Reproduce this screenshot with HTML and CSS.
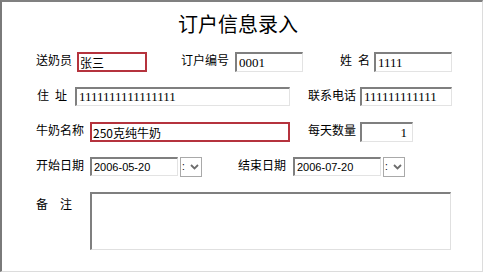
FILE: index.html
```html
<!DOCTYPE html>
<html>

<head>
    <title>订户信息录入</title>
    <link rel="stylesheet" href="styles.css">
</head>

<body>
    <div class="panel">
        <div class="panel-title">订户信息录入</div>

        <div class="form-row">
            <span class="lbl lbl-sender">送奶员</span>
            <input class="box box-red w-sender" type="text" value="张三">
            <span class="lbl lbl-no">订户编号</span>
            <input class="box box-num w-no" type="text" value="0001">
            <span class="lbl lbl-spread lbl-name"><span>姓</span><span>名</span></span>
            <input class="box box-num w-name" type="text" value="1111">
        </div>

        <div class="form-row">
            <span class="lbl lbl-spread lbl-addr"><span>住</span><span>址</span></span>
            <input class="box box-num w-addr" type="text" value="1111111111111111">
            <span class="lbl lbl-tel">联系电话</span>
            <input class="box box-num w-tel" type="text" value="111111111111">
        </div>

        <div class="form-row">
            <span class="lbl lbl-milk">牛奶名称</span>
            <input class="box box-red w-milk" type="text" value="250克纯牛奶">
            <span class="lbl lbl-tel">每天数量</span>
            <input class="box box-num box-right w-qty" type="text" value="1">
        </div>

        <div class="form-row">
            <span class="lbl lbl-milk">开始日期</span>
            <input class="box box-date w-date" type="text" value="2006-05-20">
            <div class="drop">
                <span class="drop-txt">:</span>
                <svg class="drop-arrow" width="9" height="6" viewBox="0 0 9 6"><path d="M1 1 L4.5 4.5 L8 1" fill="none" stroke="#6d6d6d" stroke-width="1.8"/></svg>
            </div>
            <span class="lbl lbl-end">结束日期</span>
            <input class="box box-date w-date" type="text" value="2006-07-20">
            <div class="drop">
                <span class="drop-txt">:</span>
                <svg class="drop-arrow" width="9" height="6" viewBox="0 0 9 6"><path d="M1 1 L4.5 4.5 L8 1" fill="none" stroke="#6d6d6d" stroke-width="1.8"/></svg>
            </div>
        </div>

        <div class="form-row form-row-memo">
            <span class="lbl lbl-spread lbl-memo"><span>备</span><span>注</span></span>
            <textarea class="box memo"></textarea>
        </div>
    </div>
</body>

</html>
```

FILE: styles.css
```css
body{
    margin: 0;
    background-color: #ffffff;
    font-family: "Noto Sans CJK SC", sans-serif;
    font-size: 12px;
    color: #000000;
}
.panel{
    width: 483px;
    height: 272px;
    box-sizing: border-box;
    border-top: 2px solid #808080;
    border-left: 2px solid #7a7a7a;
    border-right: 1px solid #dcdcdc;
    border-bottom: 1px solid #dcdcdc;
    padding: 10px 0 0 34px;
}
.panel-title{
    font-size: 20px;
    line-height: 24px;
    height: 24px;
    margin: 0 0 16px 142px;
}
.form-row{
    display: flex;
    align-items: flex-start;
    height: 20px;
    margin-bottom: 15px;
}
.form-row-memo{
    height: 58px;
}
.lbl{
    line-height: 14px;
    padding-top: 1px;
    white-space: nowrap;
    flex: none;
    box-sizing: border-box;
}
.lbl-spread{
    display: flex;
    justify-content: space-between;
}
.lbl-sender{ width: 41px; }
.lbl-no{ width: 54px; margin-left: 34px; }
.lbl-name{ width: 34px; margin-left: 37px; padding-right: 4px; }
.lbl-addr{ width: 39px; padding-left: 1px; padding-right: 8px; }
.lbl-tel{ width: 52px; margin-left: 18px; }
.lbl-milk{ width: 54px; }
.lbl-end{ width: 55px; margin-left: 36px; }
.lbl-memo{ width: 54px; padding-right: 18px; padding-top: 5px; }

.box{
    flex: none;
    box-sizing: border-box;
    height: 20px;
    margin: 0;
    padding: 0 2px;
    border-top: 2px solid #7f7f7f;
    border-left: 2px solid #7f7f7f;
    border-right: 1px solid #e3e3e3;
    border-bottom: 1px solid #e3e3e3;
    background-color: #ffffff;
    outline: none;
    color: #000000;
    font-family: "Noto Sans CJK SC", sans-serif;
    font-size: 12px;
}
.box-red{
    border: 2px solid #b5333d;
    font-size: 12px;
    padding-left: 1px;
}
.box-num{
    font-family: "Liberation Serif", serif;
    font-size: 13px;
}
.box-right{
    text-align: right;
    padding-right: 5px;
}
.box-date{
    font-family: "Liberation Sans", sans-serif;
    font-size: 11px;
    height: 19px;
}
.w-sender{ width: 70px; }
.w-no{ width: 68px; }
.w-name{ width: 78px; }
.w-addr{ width: 215px; height: 19px; }
.w-tel{ width: 92px; height: 19px; }
.w-milk{ width: 200px; }
.w-qty{ width: 53px; }
.w-date{ width: 88px; }

.drop{
    flex: none;
    box-sizing: border-box;
    width: 22px;
    height: 20px;
    margin-left: 2px;
    border: 1px solid #a9a9a9;
    display: flex;
    align-items: center;
}
.drop-txt{
    margin-left: 1px;
    font-family: "Liberation Sans", sans-serif;
    font-size: 10px;
    line-height: 12px;
}
.drop-arrow{
    margin-left: 5px;
}
.memo{
    width: 361px;
    height: 58px;
    resize: none;
    border-right: 1px solid #e0e0e0;
    border-bottom: 1px solid #e0e0e0;
}
```
